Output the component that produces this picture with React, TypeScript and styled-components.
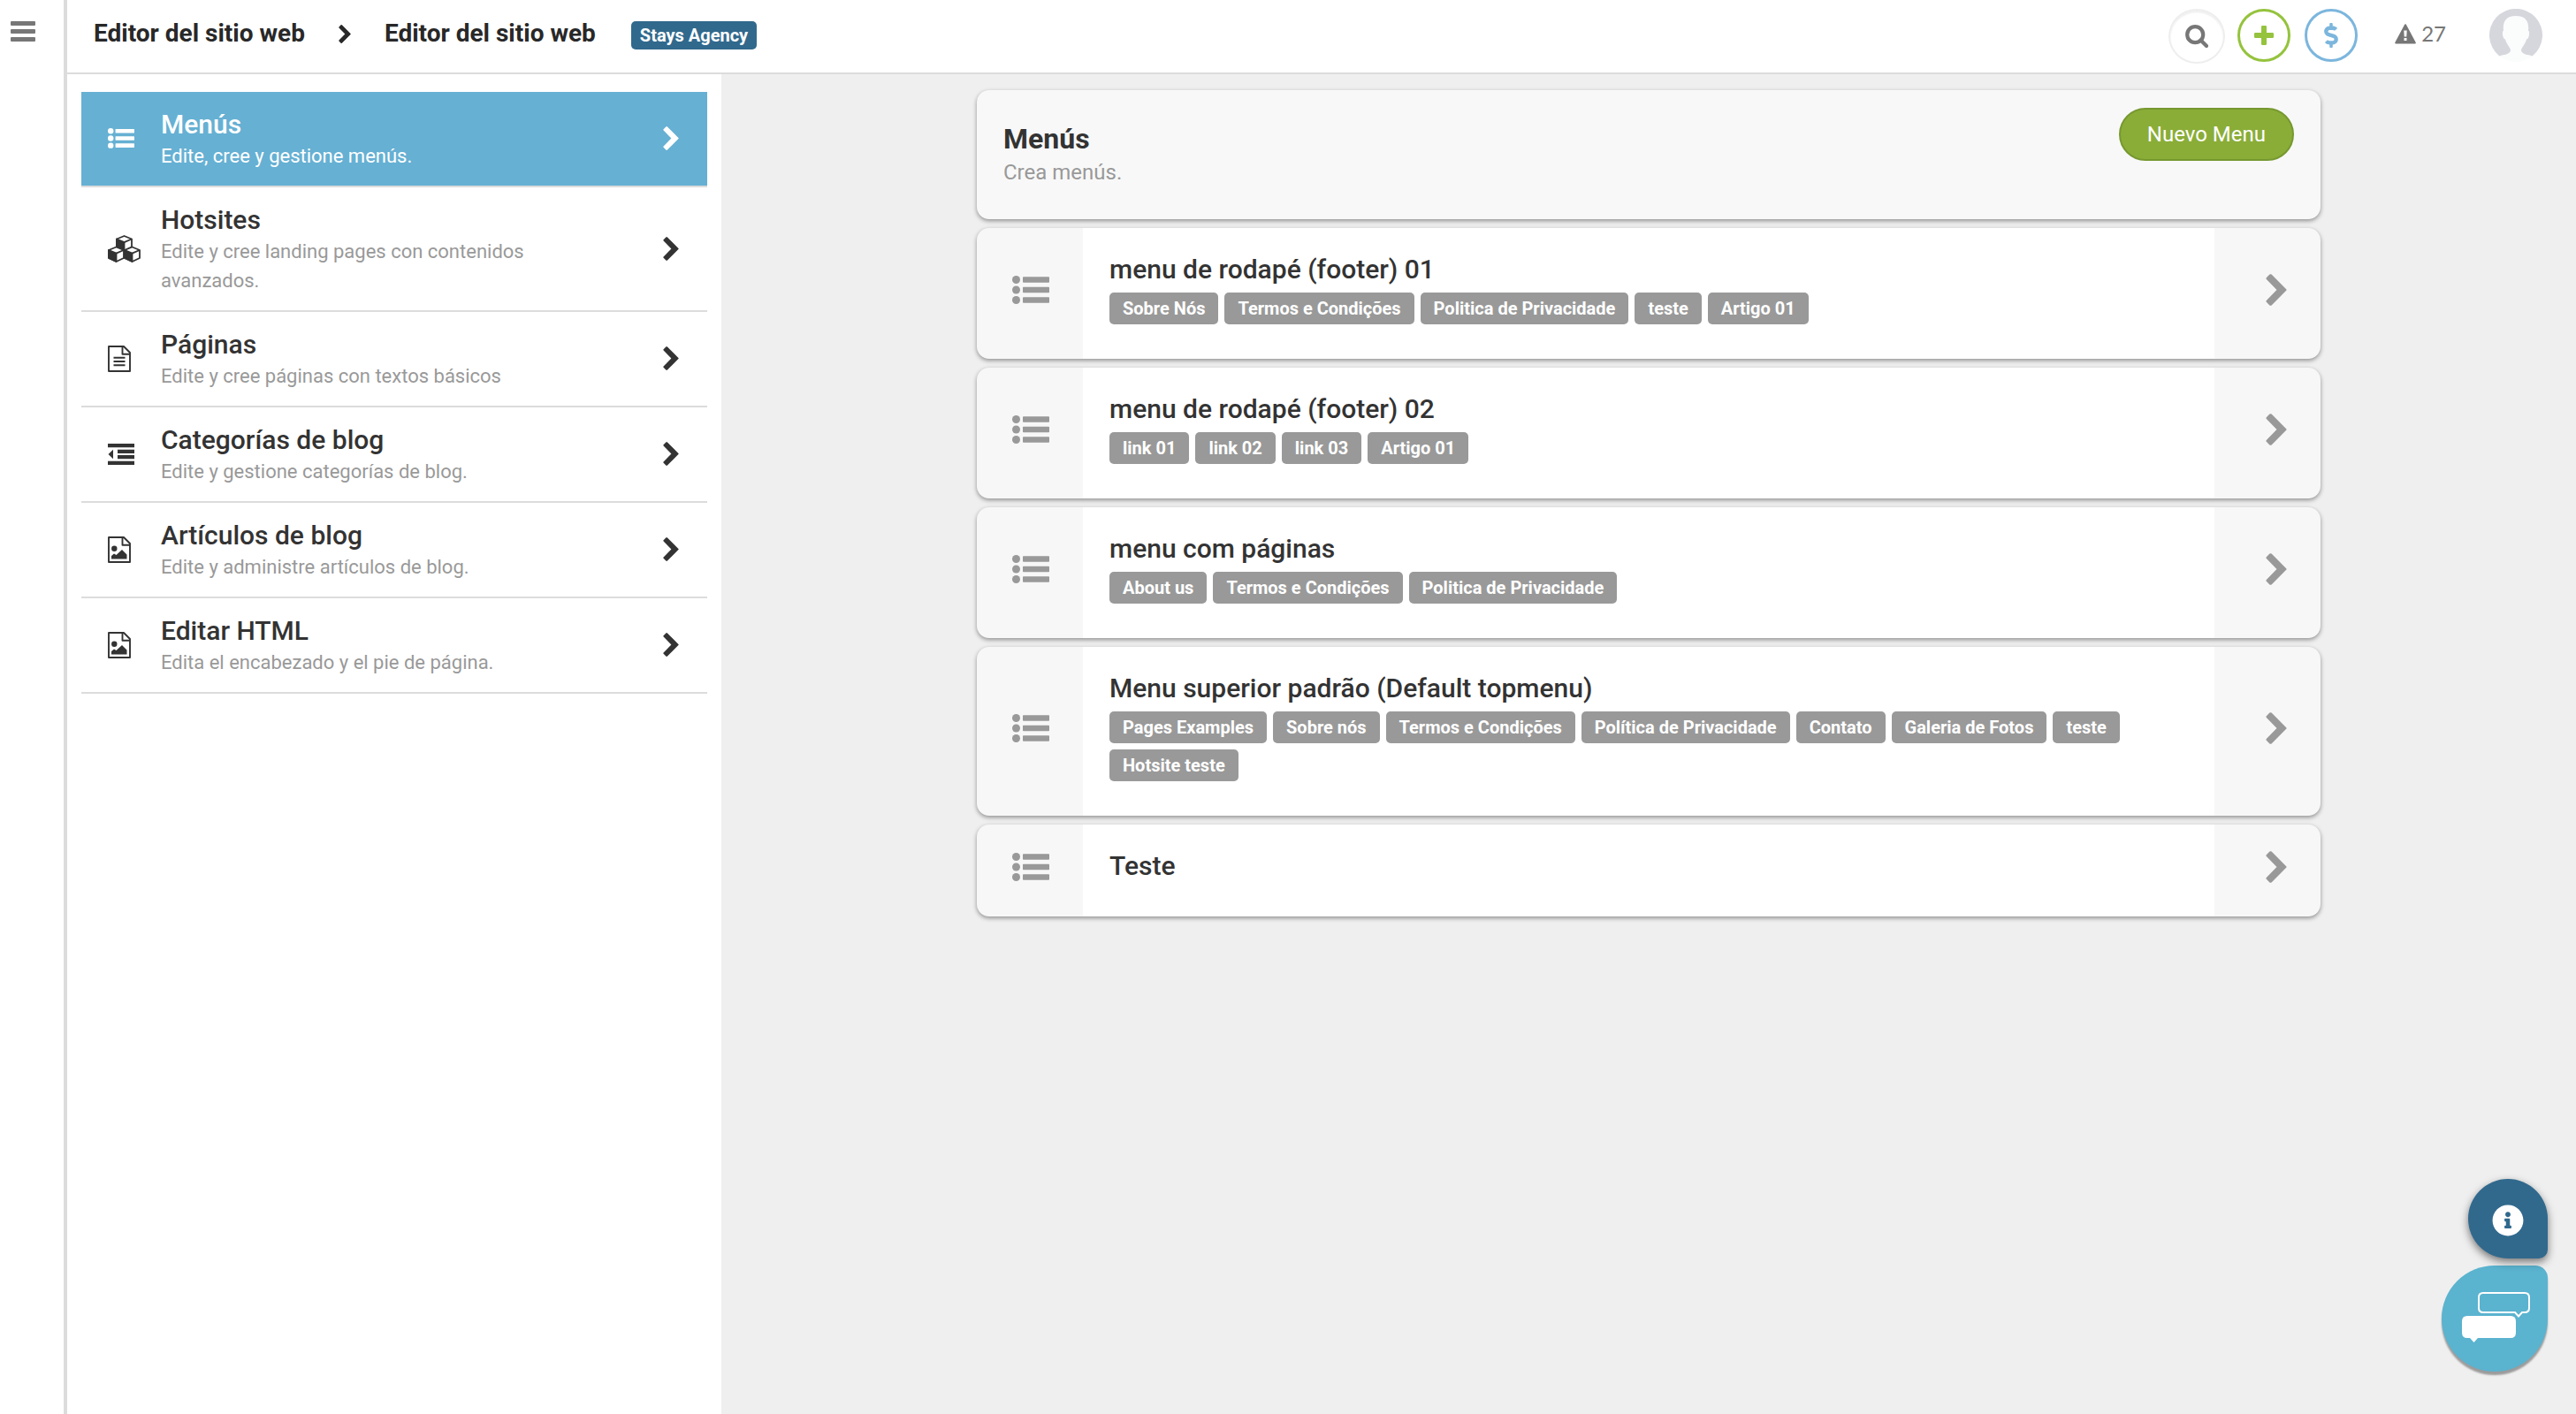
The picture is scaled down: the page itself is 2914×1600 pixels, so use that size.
import React from "react";
import styled, { createGlobalStyle } from "styled-components";
import { FaDollarSign, FaInfoCircle } from "react-icons/fa";

const font = `Roboto, "Liberation Sans", sans-serif`;

const GlobalStyle = createGlobalStyle`
  *, *::before, *::after { box-sizing: border-box; }
  body {
    margin: 0;
    background: #efefef;
    color: #333;
    font-family: ${font};
  }
  h1, h2, p, ul { margin: 0; padding: 0; }
  ul { list-style: none; }
  a { color: inherit; text-decoration: none; }
  button { font-family: inherit; cursor: pointer; }
`;

const Shell = styled.div`
  display: grid;
  grid-template-columns: 76px 1fr;
  min-height: 100vh;
`;

const Rail = styled.nav`
  background: #fff;
  border-right: 4px solid #dcdcdc;
  padding: 24px 0 0 12px;
`;

const RailButton = styled.button`
  display: flex;
  padding: 0;
  border: 0;
  background: none;
  color: #777;
`;

const Page = styled.div`
  display: grid;
  grid-template-rows: auto 1fr;
  min-width: 0;
`;

const Header = styled.header`
  display: flex;
  align-items: flex-start;
  justify-content: space-between;
  height: 84px;
  padding: 0 38px 0 30px;
  background: #fff;
  border-bottom: 2px solid #dcdcdc;
`;

const Crumbs = styled.nav`
  display: flex;
  align-items: center;
  padding-top: 18px;
  font-size: 28px;
  font-weight: 700;
  line-height: 40px;
  color: #282828;

  svg { margin: 0 38px; }
`;

const AgencyBadge = styled.span`
  margin: 4px 0 0 40px;
  padding: 0 10px;
  border-radius: 5px;
  background: #31698d;
  color: #fff;
  font-size: 20px;
  font-weight: 700;
  line-height: 32px;
`;

const Tools = styled.div`
  display: flex;
  align-items: flex-start;
  padding-top: 10px;
`;

const RoundButton = styled.button<{ $tone: string; $ring: string }>`
  display: flex;
  align-items: center;
  justify-content: center;
  width: 60px;
  height: 60px;
  margin-right: 16px;
  padding: 0;
  border: 3px solid ${(p) => p.$ring};
  border-radius: 50%;
  background: #fff;
  color: ${(p) => p.$tone};
`;

const SearchButton = styled(RoundButton)`
  width: 64px;
  height: 62px;
  margin-right: 14px;
  border-width: 2px;
  box-shadow: inset 0 2px 2px #eee;
`;

const Alerts = styled.a`
  display: flex;
  align-items: center;
  gap: 6px;
  margin-left: 26px;
  color: #777;
  font-family: Lato, ${font};
  font-size: 24px;
  line-height: 56px;
`;

const AvatarButton = styled.button`
  display: flex;
  margin-left: 49px;
  padding: 0;
  border: 0;
  background: none;
`;

const Body = styled.div`
  display: grid;
  grid-template-columns: 740px 1fr;
`;

const Sidebar = styled.aside`
  padding: 20px 16px;
  background: #fff;
`;

const SideLink = styled.a<{ $active?: boolean }>`
  display: grid;
  grid-template-columns: 60px 1fr 50px;
  align-items: center;
  padding: 16px 0 17px 30px;
  border-bottom: 2px solid #dcdcdc;
  background: ${(p) => (p.$active ? "#66b0d3" : "#fff")};
  background-clip: padding-box;
  color: ${(p) => (p.$active ? "#fff" : "#333")};
`;

const SideCopy = styled.div`
  padding-top: 2px;
`;

const SideTitle = styled.h2`
  font-size: 30px;
  font-weight: 500;
  line-height: 38px;
`;

const SideText = styled.p<{ $active?: boolean }>`
  padding-right: 100px;
  color: ${(p) => (p.$active ? "#fff" : "#999")};
  font-size: 22px;
  line-height: 33px;
`;

const Main = styled.main`
  display: flex;
  flex-direction: column;
  gap: 10px;
  width: 100%;
  max-width: 1520px;
  margin: 0 auto;
  padding-top: 18px;
`;

const cardShadow = "0 2px 5px rgba(0, 0, 0, 0.4)";

const Intro = styled.section`
  display: flex;
  justify-content: space-between;
  align-items: flex-start;
  height: 146px;
  padding: 20px 30px;
  border-radius: 14px;
  background: #f8f8f8;
  box-shadow: ${cardShadow};
`;

const IntroTitle = styled.h1`
  padding-top: 15px;
  font-size: 32px;
  font-weight: 700;
  line-height: 40px;
`;

const IntroText = styled.p`
  color: #999;
  font-size: 24px;
  line-height: 36px;
`;

const NewButton = styled.button`
  height: 60px;
  padding: 0 30px;
  border: 2px solid #76982f;
  border-radius: 30px;
  background: #8aad38;
  color: #fff;
  font-size: 24px;
`;

const List = styled.ul`
  display: flex;
  flex-direction: column;
  gap: 10px;
`;

const Card = styled.a`
  display: grid;
  grid-template-columns: 120px 1fr 120px;
  border-radius: 14px;
  background: #f7f7f7;
  box-shadow: ${cardShadow};
  color: #999;
  overflow: hidden;
`;

const CardSide = styled.div<{ $end?: boolean }>`
  display: flex;
  align-items: center;
  justify-content: ${(p) => (p.$end ? "flex-end" : "flex-start")};
  padding: 0 38px 8px 40px;
`;

const CardBody = styled.div`
  padding: 29px 30px 39px;
  background: #fff;
`;

const CardTitle = styled.h2`
  color: #333;
  font-size: 30px;
  font-weight: 500;
  line-height: 36px;
`;

const Tags = styled.ul`
  display: flex;
  flex-wrap: wrap;
  gap: 7px;
  padding-top: 8px;
`;

const Tag = styled.li`
  padding: 0 15px;
  border-radius: 5px;
  background: #999;
  color: #fff;
  font-size: 20px;
  font-weight: 700;
  line-height: 36px;
`;

const Floating = styled.div`
  position: fixed;
  right: 32px;
  bottom: 48px;
  display: flex;
  flex-direction: column;
  align-items: flex-end;
  gap: 8px;
`;

const InfoButton = styled.button`
  position: relative;
  z-index: 1;
  display: flex;
  align-items: center;
  justify-content: center;
  width: 90px;
  height: 90px;
  padding: 4px 0 0;
  border: 0;
  border-radius: 45px 45px 10px 45px;
  background: #31698d;
  color: #fff;
  box-shadow: 0 4px 10px rgba(0, 0, 0, 0.5);
`;

const ChatButton = styled.button`
  display: flex;
  align-items: center;
  justify-content: center;
  width: 120px;
  height: 120px;
  padding: 0 0 4px 4px;
  border: 0;
  border-radius: 60px 14px 60px 60px;
  background: #5ab3cf;
  box-shadow: 0 4px 2px rgba(0, 0, 0, 0.35);
`;

const Bars = () => (
  <svg width="28" height="24" viewBox="0 0 28 24" fill="currentColor">
    <rect y="0" width="28" height="5" rx="1" />
    <rect y="9" width="28" height="5" rx="1" />
    <rect y="18" width="28" height="5" rx="1" />
  </svg>
);

const Chevron = ({ height }: { height: number }) => (
  <svg width={(height * 2) / 3} height={height} viewBox="0 0 24 36" fill="currentColor">
    <path d="M4.400 .6Q5.500-.3 6.600 .6L23.200 17.200Q24 18 23.200 18.800L6.600 35.400Q5.500 36.300 4.400 35.400L.8 31.800Q0 30.900 .8 30L12.500 18 .8 6Q0 5.100 .8 4.200Z" />
  </svg>
);

const ListIcon = ({ width }: { width: number }) => (
  <svg width={width} height={(width * 32) / 42} viewBox="0 0 42 32" fill="currentColor">
    {[4.5, 16, 27.5].map((y) => (
      <g key={y}>
        <circle cx="4.500" cy={y} r="4.500" />
        <rect x="12" y={y - 3.2} width="30" height="6.400" rx="0.800" />
      </g>
    ))}
  </svg>
);

const Outdent = () => (
  <svg width="30" height="24" viewBox="0 0 30 24" fill="currentColor">
    <path d="M0 0H30V4.200H0ZM11 6.700H30V10.900H11ZM11 13.100H30V17.300H11ZM0 19.800H30V24H0ZM6 6.700V17.300L.5 12Z" />
  </svg>
);

const Search = () => (
  <svg width="26" height="26" viewBox="0 0 26 26" fill="none" stroke="currentColor" strokeWidth="4.200">
    <circle cx="11.200" cy="11.200" r="9" />
    <path d="M17.500 17.500 24 24" strokeLinecap="round" />
  </svg>
);

const Plus = () => (
  <svg width="22" height="22" viewBox="0 0 22 22" fill="currentColor">
    <rect x="8" width="6" height="22" rx="1.200" />
    <rect y="8" width="22" height="6" rx="1.200" />
  </svg>
);

const Warning = () => (
  <svg width="24" height="23" viewBox="0 0 24 23">
    <path d="M12 1.200 22.800 21.500H1.200Z" fill="currentColor" stroke="currentColor" strokeWidth="2" strokeLinejoin="round" />
    <path d="M10.300 7.500H13.700L13.300 14.500H10.700ZM10.500 16H13.500V19H10.500Z" fill="#fff" />
  </svg>
);

const Cubes = () => (
  <svg width="37" height="31" viewBox="0 0 37 31" fill="none" stroke="currentColor" strokeWidth="1.800" strokeLinejoin="round">
    {[
      [18.5, 1],
      [9.5, 13.5],
      [27.5, 13.5],
    ].map(([x, y]) => (
      <g key={x} transform={`translate(${x} ${y})`}>
        <path d="M0 0 8.500 3.500V12.500L0 16.500-8.500 12.500V3.500Z" fill="#fff" />
        <path d="M-8.500 3.500 0 7.200V16.500L-8.500 12.500Z" fill="currentColor" />
        <path d="M0 7.200 8.500 3.500" />
      </g>
    ))}
  </svg>
);

const SheetOutline = () => (
  <path d="M1 1H18L25 8V29H1ZM16.500 1V9.800H25" fill="none" stroke="currentColor" strokeWidth="1.900" strokeLinejoin="round" />
);

const TextSheet = () => (
  <svg width="26" height="30" viewBox="0 0 26 30">
    <SheetOutline />
    <path d="M6.500 13.700H19.500M6.500 18H19.500M6.500 22.300H19.500" stroke="currentColor" strokeWidth="1.900" />
  </svg>
);

const ImageSheet = () => (
  <svg width="26" height="30" viewBox="0 0 26 30">
    <SheetOutline />
    <circle cx="7.300" cy="13.700" r="3.200" fill="currentColor" />
    <path d="M4 25.500V22L7 19.500 9.500 21 16 15 21.500 20.500V25.500Z" fill="currentColor" />
  </svg>
);

const Avatar = () => (
  <svg width="60" height="60" viewBox="0 0 60 60">
    <circle cx="30" cy="30" r="30" fill="#fbfcfc" />
    <path
      d="M11.5 53.5A30 30 0 1 1 48.5 53.5C44 51.500 37 52 36 47C36 44 40.500 40.500 42 34.500C44 34.500 45.500 30 45 25.500L44 25C45 16 42.500 8 30 8C17.500 8 15 16 16 25L15 25.500C14.500 30 16 34.500 18 34.500C19.500 40.500 24 44 24 47C23 52 16 51.500 11.500 53.500Z"
      fill="#d6d7dd"
    />
  </svg>
);

const ChatBubbles = () => (
  <svg width="78" height="58" viewBox="0 0 78 58">
    <path
      d="M24 2H71Q76 2 76 7V19Q76 24 71 24H68L64 28.500 60 24H24Q19 24 19 19V7Q19 2 24 2Z"
      fill="none"
      stroke="#fff"
      strokeWidth="2"
    />
    <path d="M6 28H55Q61 28 61 34V47Q61 53 55 53H18L13.500 58 9 53H6Q0 53 0 47V34Q0 28 6 28Z" fill="#fff" />
  </svg>
);

const sections = [
  { title: "Menús", text: "Edite, cree y gestione menús.", icon: <ListIcon width={30} />, active: true },
  { title: "Hotsites", text: "Edite y cree landing pages con contenidos avanzados.", icon: <Cubes /> },
  { title: "Páginas", text: "Edite y cree páginas con textos básicos", icon: <TextSheet /> },
  { title: "Categorías de blog", text: "Edite y gestione categorías de blog.", icon: <Outdent /> },
  { title: "Artículos de blog", text: "Edite y administre artículos de blog.", icon: <ImageSheet /> },
  { title: "Editar HTML", text: "Edita el encabezado y el pie de página.", icon: <ImageSheet /> },
];

const menus = [
  { title: "menu de rodapé (footer) 01", tags: ["Sobre Nós", "Termos e Condições", "Politica de Privacidade", "teste", "Artigo 01"] },
  { title: "menu de rodapé (footer) 02", tags: ["link 01", "link 02", "link 03", "Artigo 01"] },
  { title: "menu com páginas", tags: ["About us", "Termos e Condições", "Politica de Privacidade"] },
  {
    title: "Menu superior padrão (Default topmenu)",
    tags: ["Pages Examples", "Sobre nós", "Termos e Condições", "Política de Privacidade", "Contato", "Galeria de Fotos", "teste", "Hotsite teste"],
  },
  { title: "Teste", tags: [] },
];

export default function App() {
  return (
    <>
      <GlobalStyle />
      <Shell>
        <Rail>
          <RailButton aria-label="Menu">
            <Bars />
          </RailButton>
        </Rail>
        <Page>
          <Header>
            <Crumbs>
              <a href="#sitio">Editor del sitio web</a>
              <Chevron height={21} />
              <a href="#editor">Editor del sitio web</a>
              <AgencyBadge>Stays Agency</AgencyBadge>
            </Crumbs>
            <Tools>
              <SearchButton $tone="#777" $ring="#eee" aria-label="Buscar">
                <Search />
              </SearchButton>
              <RoundButton $tone="#95c33d" $ring="#95c33d" aria-label="Crear">
                <Plus />
              </RoundButton>
              <RoundButton $tone="#7cb6dd" $ring="#7cb6dd" aria-label="Finanzas">
                <FaDollarSign size={28} />
              </RoundButton>
              <Alerts href="#alertas">
                <Warning />
                27
              </Alerts>
              <AvatarButton aria-label="Perfil">
                <Avatar />
              </AvatarButton>
            </Tools>
          </Header>
          <Body>
            <Sidebar>
              {sections.map((s) => (
                <SideLink key={s.title} href="#seccion" $active={s.active}>
                  {s.icon}
                  <SideCopy>
                    <SideTitle>{s.title}</SideTitle>
                    <SideText $active={s.active}>{s.text}</SideText>
                  </SideCopy>
                  <Chevron height={27} />
                </SideLink>
              ))}
            </Sidebar>
            <Main>
              <Intro>
                <div>
                  <IntroTitle>Menús</IntroTitle>
                  <IntroText>Crea menús.</IntroText>
                </div>
                <NewButton>Nuevo Menu</NewButton>
              </Intro>
              <List>
                {menus.map((m) => (
                  <li key={m.title}>
                    <Card href="#menu">
                      <CardSide>
                        <ListIcon width={42} />
                      </CardSide>
                      <CardBody>
                        <CardTitle>{m.title}</CardTitle>
                        {m.tags.length > 0 && (
                          <Tags>
                            {m.tags.map((t) => (
                              <Tag key={t}>{t}</Tag>
                            ))}
                          </Tags>
                        )}
                      </CardBody>
                      <CardSide $end>
                        <Chevron height={36} />
                      </CardSide>
                    </Card>
                  </li>
                ))}
              </List>
            </Main>
          </Body>
        </Page>
      </Shell>
      <Floating>
        <InfoButton aria-label="Información">
          <FaInfoCircle size={36} />
        </InfoButton>
        <ChatButton aria-label="Chat">
          <ChatBubbles />
        </ChatButton>
      </Floating>
    </>
  );
}
